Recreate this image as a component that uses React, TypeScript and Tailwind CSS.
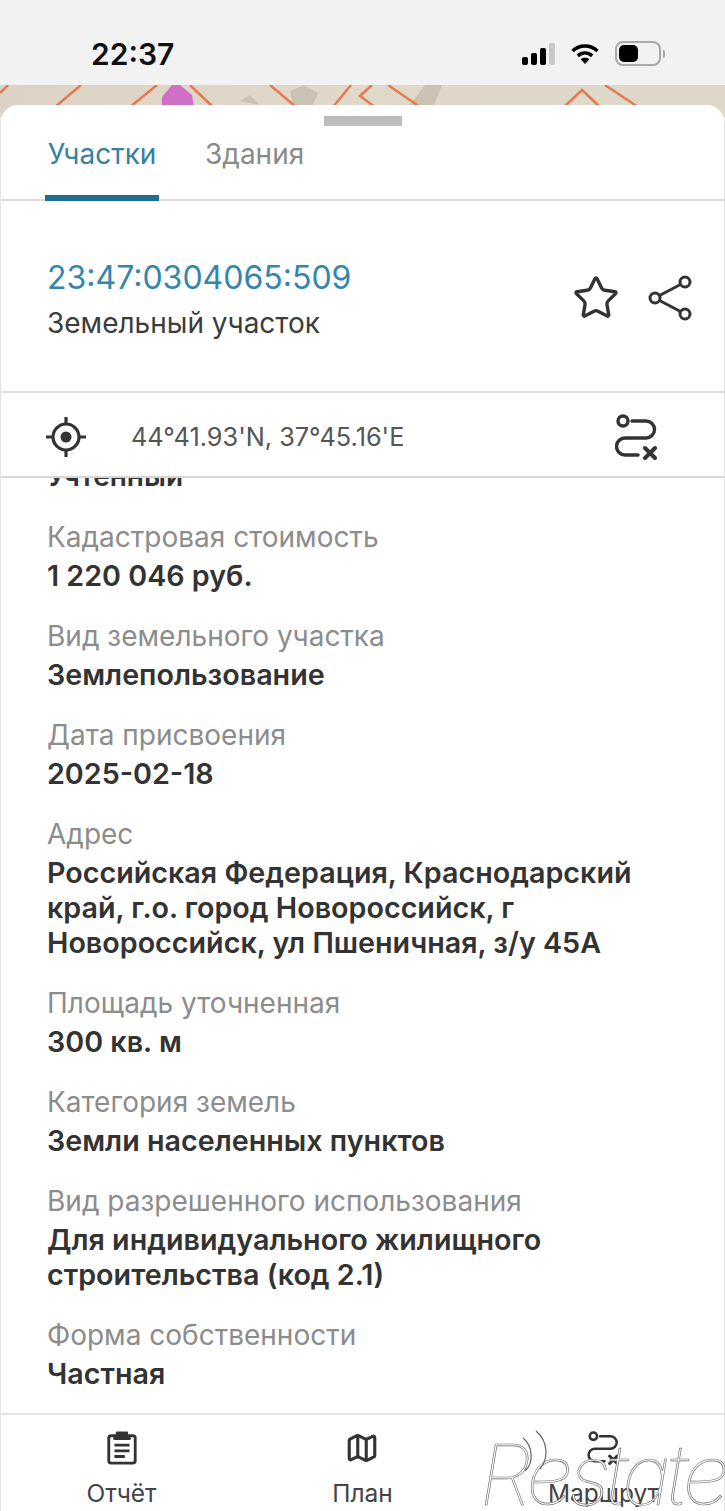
import { Map as MapIcon, Star } from "lucide-react";

const font = "[font-family:Inter,Roboto,sans-serif]";

const rows = [
  { label: "Кадастровая стоимость", value: ["1 220 046 руб."] },
  { label: "Вид земельного участка", value: ["Землепользование"] },
  { label: "Дата присвоения", value: ["2025-02-18"] },
  {
    label: "Адрес",
    value: ["Российская Федерация, Краснодарский", "край, г.о. город Новороссийск, г", "Новороссийск, ул Пшеничная, з/у 45А"],
  },
  { label: "Площадь уточненная", value: ["300 кв. м"] },
  { label: "Категория земель", value: ["Земли населенных пунктов"] },
  { label: "Вид разрешенного использования", value: ["Для индивидуального жилищного", "строительства (код 2.1)"] },
  { label: "Форма собственности", value: ["Частная"] },
];

function RouteIcon({ className }: { className: string }) {
  return (
    <svg viewBox="0 0 42 46" fill="none" stroke="currentColor" strokeWidth="3.4" strokeLinecap="round" className={className}>
      <circle cx="8" cy="7" r="5" />
      <path d="M17 7h14a8.5 8.5 0 0 1 0 17H10a8.5 8.5 0 0 0 0 17h13" />
      <path d="M30 34l10 10M40 34l-10 10" strokeWidth="4" />
    </svg>
  );
}

function ClipboardIcon({ className }: { className: string }) {
  return (
    <svg viewBox="0 0 32 36" fill="none" stroke="currentColor" strokeWidth="3" strokeLinejoin="round" className={className}>
      <rect x="2" y="5" width="28" height="29" rx="2.5" />
      <path d="M11 5V2h10v3l3 3H8z" fill="currentColor" />
      <path d="M8 15h16M8 21h16M8 27h11" />
    </svg>
  );
}

function ShareIcon({ className }: { className: string }) {
  return (
    <svg viewBox="0 0 44 46" fill="none" stroke="currentColor" strokeWidth="3" className={className}>
      <circle cx="37" cy="7" r="5" />
      <circle cx="7" cy="23" r="5" />
      <circle cx="37" cy="39" r="5" />
      <path d="M32.500 9.500L11.500 20.500M11.500 25.500l21 11" />
    </svg>
  );
}

function LocateIcon({ className }: { className: string }) {
  return (
    <svg viewBox="0 0 40 42" fill="none" stroke="currentColor" strokeWidth="3.2" className={className}>
      <circle cx="20" cy="21" r="13" />
      <circle cx="20" cy="21" r="5.500" fill="currentColor" stroke="none" />
      <path d="M20 1v7M20 34v7M0 21h7M33 21h7" />
    </svg>
  );
}

function StatusIcons() {
  return (
    <div className="flex items-center gap-[15px]">
      {/* Signal */}
      <div className="flex items-end gap-[3px]">
        <div className="h-[8px] w-[6px] rounded-[2px] bg-black" />
        <div className="h-[12px] w-[6px] rounded-[2px] bg-black" />
        <div className="h-[17px] w-[6px] rounded-[2px] bg-black" />
        <div className="h-[22px] w-[6px] rounded-[2px] bg-[#c8c8c8]" />
      </div>
      {/* Wifi */}
      <svg viewBox="0 0 30 24" className="h-[23px] w-[30px]" fill="none" stroke="#000" strokeWidth="3.6">
        <path d="M2 9.500c7.500-7 18.500-7 26 0" />
        <path d="M7.500 14.500c4.500-4 10.500-4 15 0" />
        <path d="M15 23l-4.500-5c2.500-2 6.500-2 9 0z" fill="#000" stroke="none" />
      </svg>
      {/* Battery */}
      <div className="flex items-center gap-[2px]">
        <div className="flex h-[25px] w-[46px] items-center rounded-[8px] border-2 border-[#a9a9a9] p-[2px]">
          <div className="h-full w-[19px] rounded-[5px] bg-black" />
        </div>
        <div className="h-[8px] w-[2px] rounded-r bg-[#a9a9a9]" />
      </div>
    </div>
  );
}

export default function App() {
  return (
    <div className={`relative flex h-[1511px] w-[725px] flex-col overflow-hidden bg-white ${font}`}>
      {/* Status bar */}
      <div className="flex h-[85px] items-end justify-between bg-[#f2f2f2] pb-[14px] pl-[91px] pr-[60px]">
        <span className="text-[30px] leading-[34px] font-semibold text-[#111]">22:37</span>
        <div className="pb-[5px]">
          <StatusIcons />
        </div>
      </div>

      {/* Map strip */}
      <div className="h-[32px] bg-gradient-to-r from-[#ddd3c5] via-[#e0d9c9] to-[#ddd8ca]">
        <svg viewBox="0 0 725 32" className="h-[32px] w-[725px]" fill="none">
          <path d="M290 6l14-6 14 8-6 14-18 2zM425 0l17 0-8 20-24 0zM240 16l10-6 10 10z" fill="#cbc2b4" />
          <path d="M162 12l10-12h8l12 10 2 12h-32z" fill="#d070c4" />
          <g stroke="#e57a52" strokeWidth="2.500">
            <path d="M55 22L81 0M130 22L157 0M190 0l23 22M270 0l26 22M333 22L351 0M372 0l-12 11 15 11M388 0l32 22M564 22l18-17 18 17M605 0l33 22M0 8L8 0" />
          </g>
        </svg>
      </div>

      {/* Bottom sheet */}
      <div className="relative -mt-[12px] flex min-h-0 flex-1 flex-col rounded-t-[18px] border-x border-[#e4e4e4] bg-white">
        <div className="flex h-[21px] justify-center pt-[11px]">
          <div className="h-[10px] w-[78px] bg-[#bdbdbd]" />
        </div>

        {/* Tabs */}
        <div className="flex h-[75px] gap-[46px] border-b-2 border-[#dcdcdc] pl-[44px] text-[28px]">
          <div className="relative -mb-[2px] flex w-[114px] justify-center border-b-[6px] border-[#1f6b94] pt-[10px] leading-[36px] text-[#35819f]">
            Участки
          </div>
          <div className="pt-[10px] leading-[36px] text-[#8a8a8a]">Здания</div>
        </div>

        {/* Parcel title */}
        <div className="flex h-[192px] items-center justify-between border-b-2 border-[#dedede] pl-[46px] pr-[32px] pt-[10px]">
          <div>
            <div className="text-[32px] leading-[44px] text-[#3387ac]">23:47:0304065:509</div>
            <div className="text-[28px] leading-[46px] text-[#3c3c3c]">Земельный участок</div>
          </div>
          <div className="flex items-center gap-[28px] pb-[6px] text-[#333]">
            <Star className="size-[48px]" strokeWidth={1.7} />
            <ShareIcon className="h-[46px] w-[44px]" />
          </div>
        </div>

        {/* Coordinates */}
        <div className="flex h-[85px] items-center justify-between border-b-2 border-[#d6d6d6] pl-[45px] pr-[67px] pt-[4px]">
          <div className="flex items-center gap-[45px]">
            <LocateIcon className="h-[42px] w-[40px] text-[#333]" />
            <span className="text-[25.300px] text-[#555]">44°41.93'N, 37°45.16'E</span>
          </div>
          <RouteIcon className="h-[46px] w-[42px] text-[#333]" />
        </div>

        {/* Scrolled details */}
        <div className="flex min-h-0 flex-1 flex-col justify-end gap-[26px] overflow-hidden border-b-2 border-[#e2e2e2] pb-[22px] pl-[46px]">
          <div className="text-[28px] leading-[36px] font-semibold text-[#333]">Учтенный</div>
          {rows.map((row) => (
            <div key={row.label} className="flex flex-col gap-[2px]">
              <div className="-mt-px text-[28px] leading-[36px] text-[#8c8c8c]">{row.label}</div>
              <div className="mt-px text-[28.700px] leading-[35px] font-semibold text-[#333]">
                {row.value.map((line) => (
                  <div key={line}>{line}</div>
                ))}
              </div>
            </div>
          ))}
        </div>

        {/* Bottom nav */}
        <div className="grid h-[96px] grid-cols-3 justify-items-center pt-[16px] text-[24.500px] leading-[30px] text-[#444]">
          <div className="flex flex-col items-center gap-[13px]">
            <ClipboardIcon className="h-[34px] w-[32px] text-[#333]" />
            <span>Отчёт</span>
          </div>
          <div className="flex flex-col items-center gap-[13px]">
            <MapIcon className="h-[34px] w-[40px] text-[#333]" strokeWidth={2.2} />
            <span>План</span>
          </div>
          <div className="flex flex-col items-center gap-[13px]">
            <RouteIcon className="h-[34px] w-[32px] text-[#333]" />
            <span>Маршрут</span>
          </div>
        </div>
      </div>

      {/* Watermark */}
      <div className="pointer-events-none absolute -bottom-[6px] right-0 text-[84px] leading-[84px] font-thin tracking-[-4px] text-white italic [-webkit-text-stroke:0.6px_#666]">
        Restate
      </div>
      <svg viewBox="0 0 40 50" fill="none" stroke="#666" strokeWidth="1.2" className="pointer-events-none absolute left-[520px] top-[1430px] h-[50px] w-[40px]">
        <path d="M3 8c10 8 11 25 2 33M16 1c12 10 13 27 4 38" />
      </svg>
    </div>
  );
}
